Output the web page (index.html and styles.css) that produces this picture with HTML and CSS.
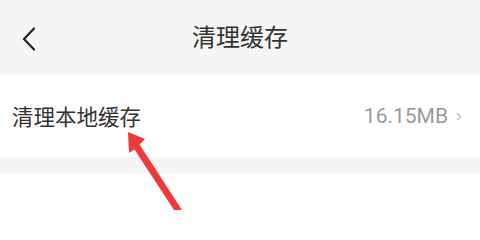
FILE: index.html
```html
<!DOCTYPE html>
<html lang="zh">
<head>
<meta charset="utf-8">
<link rel="stylesheet" href="styles.css">
</head>
<body>
<div class="page">
  <header class="header">
    <div class="back">
      <svg width="16" height="24" viewBox="0 0 16 24"><path d="M13 1.5 L3 12 L13 22.5" fill="none" stroke="#222" stroke-width="2.2" stroke-linecap="round" stroke-linejoin="round"/></svg>
    </div>
    <h1 class="title">清理缓存</h1>
    <div></div>
  </header>
  <div class="row">
    <span class="label">清理本地缓存</span>
    <span class="value">16.15MB<svg class="chev" width="6" height="9" viewBox="0 0 6 9"><path d="M1 1 L4.5 4.5 L1 8" fill="none" stroke="#bbb" stroke-width="1.2"/></svg></span>
  </div>
  <div class="gap"></div>
  <div class="rest"></div>
  <svg class="arrow" width="480" height="210" viewBox="0 0 480 210"><polygon points="128,132 145,139 139.5,144.5 182,210 174,210 134.5,149.5 129,153" fill="#f03a3a"/></svg>
</div>
</body>
</html>
```

FILE: styles.css
```css
html, body {
  margin: 0;
  padding: 0;
  background: #fff;
}
.page {
  position: relative;
  width: 480px;
  height: 210px;
  overflow: hidden;
  font-family: "Noto Sans CJK SC", "Noto Sans", sans-serif;
}
.header {
  height: 75px;
  background: #f5f5f5;
  display: grid;
  grid-template-columns: 1fr auto 1fr;
  align-items: center;
}
.back {
  padding-left: 21px;
  padding-top: 2px;
  display: flex;
  align-items: center;
}
.title {
  margin: 0;
  font-size: 24px;
  font-weight: 400;
  color: #333;
  line-height: 1;
  padding-bottom: 3px;
}
.row {
  height: 82px;
  background: #fff;
  display: flex;
  align-items: center;
  justify-content: space-between;
  padding: 0 18px 0 12px;
}
.label {
  font-size: 21.5px;
  color: #333;
  line-height: 1;
}
.value {
  font-family: Roboto, "Noto Sans", sans-serif;
  font-size: 21px;
  color: #9a9a9a;
  display: flex;
  align-items: center;
  gap: 8px;
}
.gap {
  height: 16px;
  background: #f5f5f5;
}
.rest {
  height: 37px;
  background: #fff;
}
.arrow {
  position: absolute;
  left: 0;
  top: 0;
  pointer-events: none;
}
```
